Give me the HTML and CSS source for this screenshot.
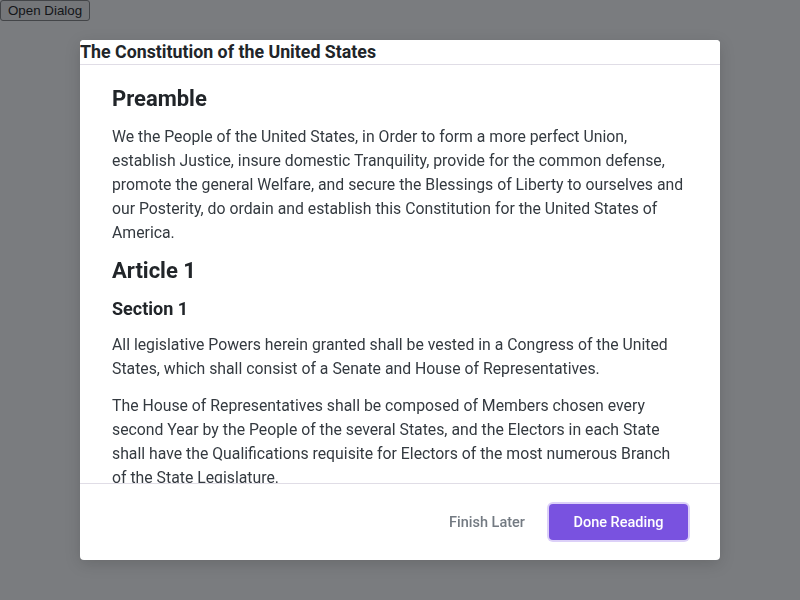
FILE: index.html
```html
<!DOCTYPE html>
<html>
<head>
<meta charset="utf-8">
<link rel="stylesheet" href="styles.css">
</head>
<body>
<button class="open-btn">Open Dialog</button>
<div class="backdrop">
  <div class="dialog">
    <div class="dialog-header">
      <h1 class="dialog-title">The Constitution of the United States</h1>
    </div>
    <div class="dialog-body">
      <h2 class="h-article">Preamble</h2>
      <p>We the People of the United States, in Order to form a more perfect Union, establish Justice, insure domestic Tranquility, provide for the common defense, promote the general Welfare, and secure the Blessings of Liberty to ourselves and our Posterity, do ordain and establish this Constitution for the United States of America.</p>
      <h2 class="h-article">Article 1</h2>
      <h3 class="h-section">Section 1</h3>
      <p>All legislative Powers herein granted shall be vested in a Congress of the United States, which shall consist of a Senate and House of Representatives.</p>
      <p>The House of Representatives shall be composed of Members chosen every second Year by the People of the several States, and the Electors in each State shall have the Qualifications requisite for Electors of the most numerous Branch of the State Legislature.</p>
      <p>No Person shall be a Representative who shall not have attained to the Age of twenty five Years, and been seven Years a Citizen of the United States.</p>
    </div>
    <div class="dialog-footer">
      <button class="btn btn-plain">Finish Later</button>
      <button class="btn btn-primary">Done Reading</button>
    </div>
  </div>
</div>
</body>
</html>
```

FILE: styles.css
```css
html, body {
  margin: 0;
  padding: 0;
  height: 100%;
}
body {
  background: #ffffff;
  font-family: Roboto, "Liberation Sans", sans-serif;
}
.open-btn {
  font-family: "Liberation Sans", Arial, sans-serif;
  font-size: 13.33px;
  margin: 0;
  padding: 1px 7px;
  border: 1px solid #767676;
  border-radius: 3px;
  background: #efefef;
  color: #000;
  height: 21px;
}
.backdrop {
  position: fixed;
  inset: 0;
  background: rgba(33, 37, 41, 0.6);
  display: flex;
  justify-content: center;
  align-items: center;
}
.dialog {
  width: 640px;
  height: 520px;
  background: #fff;
  border-radius: 4px;
  display: flex;
  flex-direction: column;
  overflow: hidden;
  box-shadow: 0 4px 16px rgba(0, 0, 0, 0.15);
}
.dialog-header {
  border-bottom: 1px solid #e0dde6;
  height: 24px;
  flex: none;
}
.dialog-title {
  margin: 0;
  font-size: 17.8px;
  font-weight: 700;
  line-height: 24px;
  color: #212529;
  background: #fff;
}
.dialog-body {
  flex: 1;
  overflow: hidden;
  padding: 21px 32px 0 32px;
  color: #343a40;
}
.h-article {
  margin: 0 0 13px 0;
  font-size: 22px;
  font-weight: 700;
  line-height: 1.2;
  color: #212529;
}
.h-section {
  margin: 0 0 14px 0;
  font-size: 18px;
  font-weight: 700;
  line-height: 1.2;
  color: #212529;
}
.dialog-body p {
  margin: 0 0 13px 0;
  font-size: 15.8px;
  line-height: 24px;
}
.dialog-footer {
  flex: none;
  border-top: 1px solid #e0dde6;
  padding: 20px 32px;
  display: flex;
  justify-content: flex-end;
  align-items: center;
  gap: 8px;
}
.btn {
  font-family: Roboto, "Liberation Sans", sans-serif;
  font-size: 14.5px;
  font-weight: 500;
  height: 36px;
  padding: 0 16px;
  border: none;
  border-radius: 4px;
  cursor: pointer;
}
.btn-plain {
  background: transparent;
  color: #737a82;
}
.btn-primary {
  background: #7952e0;
  color: #fff;
  width: 139px;
  box-shadow: 0 0 0 2px #dcd0f8;
}
```
